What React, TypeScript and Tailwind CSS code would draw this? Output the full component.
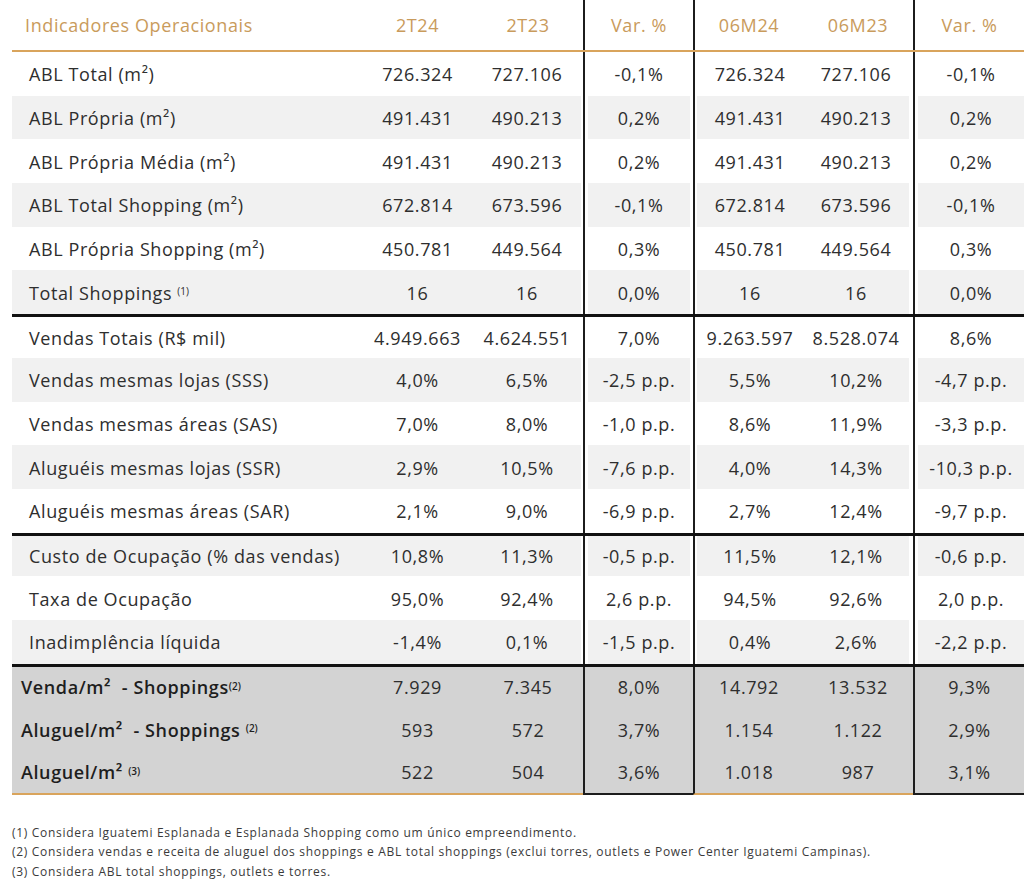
import type { ReactNode } from "react";

type Row = {
  label: ReactNode;
  values: string[];
};

const FONT = { fontFamily: '"Open Sans", "Noto Sans", sans-serif' };

const sup = (n: string, space = false) => (
  <>
    {space ? "\u00a0" : ""}
    <sup className="text-[10px] relative -top-[2px] tracking-normal">({n})</sup>
  </>
);

const groupA: Row[] = [
  { label: "ABL Total (m²)", values: ["726.324", "727.106", "-0,1%", "726.324", "727.106", "-0,1%"] },
  { label: "ABL Própria (m²)", values: ["491.431", "490.213", "0,2%", "491.431", "490.213", "0,2%"] },
  { label: "ABL Própria Média (m²)", values: ["491.431", "490.213", "0,2%", "491.431", "490.213", "0,2%"] },
  { label: "ABL Total Shopping (m²)", values: ["672.814", "673.596", "-0,1%", "672.814", "673.596", "-0,1%"] },
  { label: "ABL Própria Shopping (m²)", values: ["450.781", "449.564", "0,3%", "450.781", "449.564", "0,3%"] },
  { label: <>Total Shoppings{sup("1", true)}</>, values: ["16", "16", "0,0%", "16", "16", "0,0%"] },
];

const groupB: Row[] = [
  { label: "Vendas Totais (R$ mil)", values: ["4.949.663", "4.624.551", "7,0%", "9.263.597", "8.528.074", "8,6%"] },
  { label: "Vendas mesmas lojas (SSS)", values: ["4,0%", "6,5%", "-2,5 p.p.", "5,5%", "10,2%", "-4,7 p.p."] },
  { label: "Vendas mesmas áreas (SAS)", values: ["7,0%", "8,0%", "-1,0 p.p.", "8,6%", "11,9%", "-3,3 p.p."] },
  { label: "Aluguéis mesmas lojas (SSR)", values: ["2,9%", "10,5%", "-7,6 p.p.", "4,0%", "14,3%", "-10,3 p.p."] },
  { label: "Aluguéis mesmas áreas (SAR)", values: ["2,1%", "9,0%", "-6,9 p.p.", "2,7%", "12,4%", "-9,7 p.p."] },
];

const groupC: Row[] = [
  { label: "Custo de Ocupação (% das vendas)", values: ["10,8%", "11,3%", "-0,5 p.p.", "11,5%", "12,1%", "-0,6 p.p."] },
  { label: "Taxa de Ocupação", values: ["95,0%", "92,4%", "2,6 p.p.", "94,5%", "92,6%", "2,0 p.p."] },
  { label: "Inadimplência líquida", values: ["-1,4%", "0,1%", "-1,5 p.p.", "0,4%", "2,6%", "-2,2 p.p."] },
];

const groupD: Row[] = [
  { label: <>Venda/m²&nbsp; - Shoppings{sup("2")}</>, values: ["7.929", "7.345", "8,0%", "14.792", "13.532", "9,3%"] },
  { label: <>Aluguel/m²&nbsp; - Shoppings{sup("2", true)}</>, values: ["593", "572", "3,7%", "1.154", "1.122", "2,9%"] },
  { label: <>Aluguel/m²{sup("3", true)}</>, values: ["522", "504", "3,6%", "1.018", "987", "3,1%"] },
];

// outer cell: width + vertical rule; inner: stripe inset away from the rules
const cols = [
  { outer: "w-[350px]", inset: "" },
  { outer: "w-[111px]", inset: "" },
  { outer: "w-[110px]", inset: "mr-[2px]" },
  { outer: "w-[110px] border-l-2 border-[#1c1c1c]", inset: "mx-[3px]" },
  { outer: "w-[110px] border-l-2 border-[#1c1c1c]", inset: "ml-[2px]" },
  { outer: "w-[110px]", inset: "mr-[4px]" },
  { outer: "w-[111px] border-l-2 border-[#1c1c1c]", inset: "ml-[3px]" },
];

function StripedRow({ row, shaded, topRule }: { row: Row; shaded: boolean; topRule: boolean }) {
  const cells = [row.label, ...row.values];
  return (
    <div className={`flex h-[43.7px] ${topRule ? "border-t-[3px] border-[#111]" : ""}`}>
      {cells.map((c, i) => (
        <div key={i} className={`${cols[i].outer} h-full flex`}>
          <div
            className={`flex-1 h-full flex items-center pt-[2px] whitespace-nowrap ${cols[i].inset} ${
              shaded ? "bg-[#f1f1f1]" : "bg-white"
            } ${i === 0 ? "pl-[17px] justify-start" : "justify-center"}`}
          >
            {c}
          </div>
        </div>
      ))}
    </div>
  );
}

function GrayRow({ row, topRule, last }: { row: Row; topRule: boolean; last: boolean }) {
  const cells = [row.label, ...row.values];
  return (
    <div className={`flex h-[43.7px] bg-[#d3d3d3] ${topRule ? "border-t-[3px] border-[#111]" : ""}`}>
      {cells.map((c, i) => {
        const isVar = i === 3 || i === 6;
        const bottom = last ? (isVar ? "border-b-2 border-b-[#1c1c1c]" : "border-b-2 border-b-[#d9a45c]") : "";
        return (
          <div
            key={i}
            className={`${cols[i].outer} ${bottom} h-full flex items-center pt-[2px] whitespace-nowrap ${
              i === 0 ? "pl-[9px] justify-start font-semibold text-[#1e1e1e]" : "justify-center"
            }`}
          >
            {c}
          </div>
        );
      })}
    </div>
  );
}

export default function App() {
  const header = ["Indicadores Operacionais", "2T24", "2T23", "Var. %", "06M24", "06M23", "Var. %"];
  return (
    <div className="w-[1024px] h-[881px] bg-white overflow-hidden" style={FONT}>
      <div className="ml-[12px] w-[1012px] text-[18px] tracking-[0.6px] text-[#2e2e2e]">
        <div className="flex h-[52px] border-b-2 border-[#d9a45c] text-[#c99b5c]">
          {header.map((h, i) => (
            <div
              key={i}
              className={`${cols[i].outer} h-full flex items-center ${
                i === 0 ? "pl-[13px] justify-start" : "justify-center"
              }`}
            >
              {h}
            </div>
          ))}
        </div>
        {groupA.map((r, i) => (
          <StripedRow key={`a${i}`} row={r} shaded={i % 2 === 1} topRule={false} />
        ))}
        {groupB.map((r, i) => (
          <StripedRow key={`b${i}`} row={r} shaded={i % 2 === 1} topRule={i === 0} />
        ))}
        {groupC.map((r, i) => (
          <StripedRow key={`c${i}`} row={r} shaded={i % 2 === 0} topRule={i === 0} />
        ))}
        {groupD.map((r, i) => (
          <GrayRow key={`d${i}`} row={r} topRule={i === 0} last={i === groupD.length - 1} />
        ))}
      </div>
      <div className="ml-[12px] mt-[28px] text-[12px] tracking-[0.7px] leading-[19.5px] text-[#3a3a3a]">
        <p>(1) Considera Iguatemi Esplanada e Esplanada Shopping como um único empreendimento.</p>
        <p>
          (2) Considera vendas e receita de aluguel dos shoppings e ABL total shoppings (exclui torres, outlets e Power
          Center Iguatemi Campinas).
        </p>
        <p>(3) Considera ABL total shoppings, outlets e torres.</p>
      </div>
    </div>
  );
}
